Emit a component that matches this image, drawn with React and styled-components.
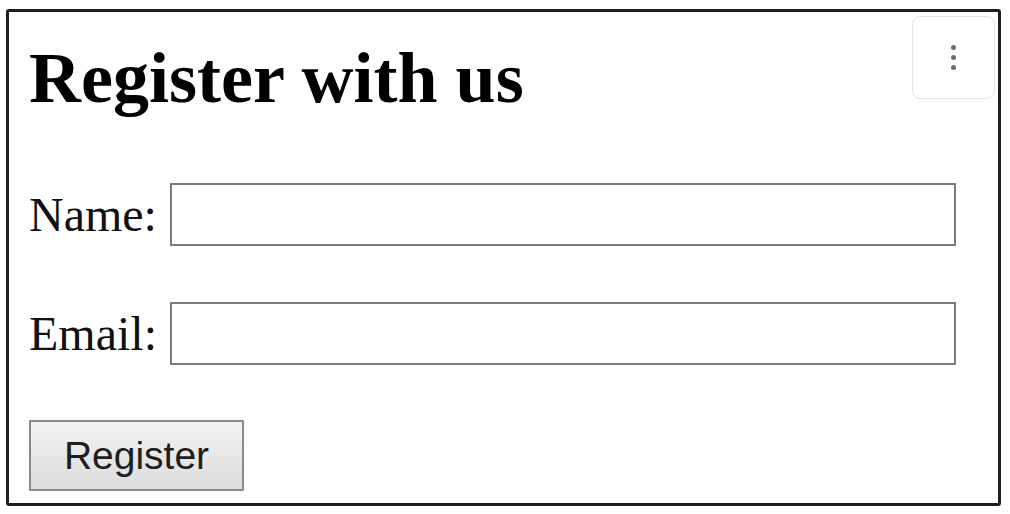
import React from "react";
import styled, { createGlobalStyle } from "styled-components";

const Global = createGlobalStyle`
  html, body { margin: 0; padding: 0; background: #ffffff; }
  body { font-family: "Liberation Serif", "Times New Roman", serif; color: #000; }
`;

const Frame = styled.div`
  position: relative;
  box-sizing: border-box;
  margin: 9px 0 0 6px;
  width: 995px;
  height: 497px;
  border: 3px solid #1e1e1e;
  border-radius: 3px;
  padding: 30px 20px 0 20px;
  display: flex;
  flex-direction: column;
  align-items: flex-start;
`;

const Title = styled.h1`
  margin: 0;
  font-family: "Liberation Serif", "Times New Roman", serif;
  font-weight: 700;
  font-size: 72px;
  line-height: 72px;
  color: #000;
`;

const Form = styled.form`
  display: flex;
  flex-direction: column;
  gap: 56px;
  margin-top: 69px;
  align-self: stretch;
`;

const Row = styled.div`
  display: flex;
  align-items: center;
`;

const Label = styled.label`
  width: 141px;
  font-family: "Liberation Serif", "Times New Roman", serif;
  font-size: 48px;
  line-height: 48px;
  color: #111;
`;

const Input = styled.input`
  box-sizing: border-box;
  width: 786px;
  height: 63px;
  border: 2px solid #7c7c7c;
  border-radius: 0;
  background: #fff;
  outline: none;
  padding: 0 8px;
  font-size: 30px;
`;

const Button = styled.button`
  box-sizing: border-box;
  margin-top: -1px;
  align-self: flex-start;
  width: 215px;
  height: 71px;
  border: 2px solid #8a8a8a;
  border-radius: 1px;
  background: linear-gradient(#f3f3f3, #dcdcdc);
  font-family: "Liberation Sans", Arial, sans-serif;
  font-size: 39px;
  color: #1e1e1e;
  padding: 0;
  cursor: pointer;
`;

const MenuButton = styled.button`
  position: absolute;
  top: 4px;
  right: 3px;
  box-sizing: border-box;
  width: 83px;
  height: 83px;
  border: 1.5px solid #e3e3e9;
  border-radius: 8px;
  background: #fff;
  display: flex;
  flex-direction: column;
  align-items: center;
  justify-content: center;
  gap: 5px;
  padding: 0;
`;

const Dot = styled.span`
  width: 5px;
  height: 5px;
  border-radius: 50%;
  background: #6b6b75;
`;

export default function App() {
  return (
    <>
      <Global />
      <Frame>
        <MenuButton type="button" aria-label="More options">
          <Dot />
          <Dot />
          <Dot />
        </MenuButton>
        <Title>Register with us</Title>
        <Form onSubmit={(e) => e.preventDefault()}>
          <Row>
            <Label htmlFor="name">Name:</Label>
            <Input id="name" type="text" />
          </Row>
          <Row>
            <Label htmlFor="email">Email:</Label>
            <Input id="email" type="email" />
          </Row>
          <Button type="submit">Register</Button>
        </Form>
      </Frame>
    </>
  );
}
